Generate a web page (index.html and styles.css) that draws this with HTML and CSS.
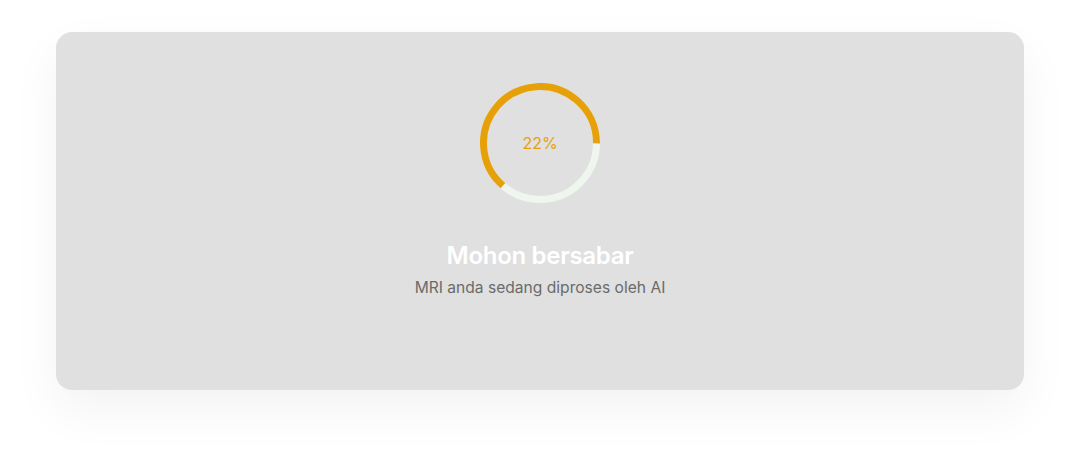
FILE: index.html
```html
<!DOCTYPE html>
<html lang="id">
<head>
<meta charset="utf-8">
<title>Memproses</title>
<link rel="stylesheet" href="styles.css">
</head>
<body>
  <main class="page">
    <section class="card">
      <div class="progress">
        <svg class="ring" width="120" height="120" viewBox="0 0 120 120">
          <circle class="ring-track" cx="60" cy="60" r="56.5"></circle>
          <circle class="ring-fill" cx="60" cy="60" r="56.5" stroke-dasharray="225.8 355" transform="rotate(131 60 60)"></circle>
        </svg>
        <span class="progress-value">22%</span>
      </div>
      <h1 class="title">Mohon bersabar</h1>
      <p class="subtitle">MRI anda sedang diproses oleh AI</p>
    </section>
  </main>
</body>
</html>
```

FILE: styles.css
```css
html, body {
  margin: 0;
  padding: 0;
  background: #ffffff;
}

body {
  font-family: Inter, "Noto Sans", sans-serif;
  min-height: 100vh;
}

.page {
  padding: 32px 56px;
}

.card {
  height: 358px;
  box-sizing: border-box;
  background: #e0e0e0;
  border-radius: 16px;
  box-shadow: 0 20px 50px rgba(0, 0, 0, 0.05);
  display: flex;
  flex-direction: column;
  align-items: center;
  padding-top: 51px;
}

.progress {
  position: relative;
  width: 120px;
  height: 120px;
}

.ring {
  display: block;
}

.ring-track,
.ring-fill {
  fill: none;
  stroke-width: 7;
}

.ring-track {
  stroke: #eef6ee;
}

.ring-fill {
  stroke: #e6a00a;
}

.progress-value {
  position: absolute;
  inset: 0;
  display: flex;
  align-items: center;
  justify-content: center;
  color: #e6a00a;
  font-size: 16px;
}

.title {
  margin: 39px 0 0;
  font-size: 24px;
  font-weight: 600;
  color: #ffffff;
  line-height: 28px;
  letter-spacing: -0.3px;
}

.subtitle {
  margin: 8px 0 0;
  font-size: 15.6px;
  color: #6b6b6b;
  line-height: 20px;
}
```
